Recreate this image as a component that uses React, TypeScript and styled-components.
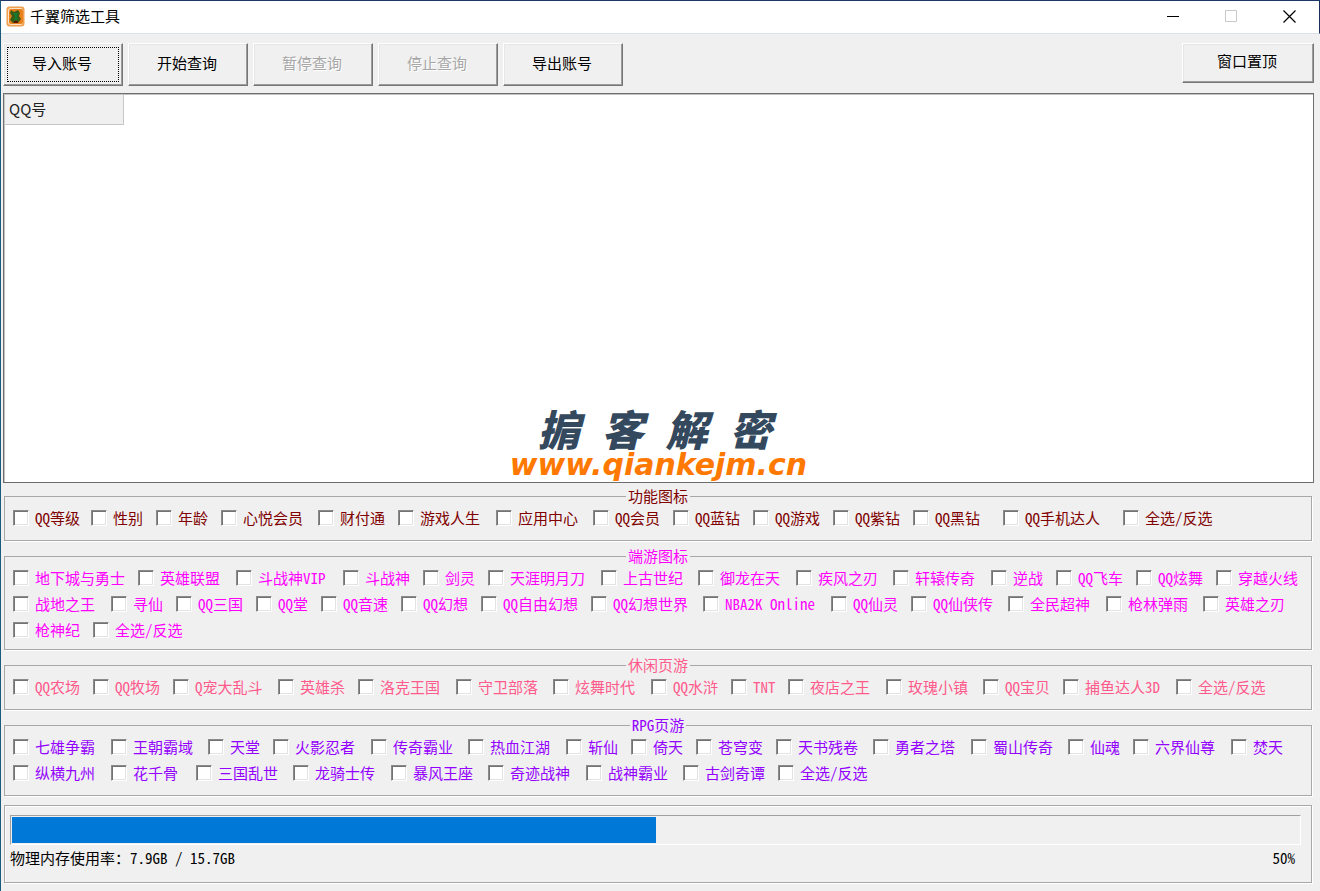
import React from "react";
import styled, { createGlobalStyle } from "styled-components";

const sans = `"Noto Sans CJK SC", "Noto Sans", sans-serif`;

const GlobalStyle = createGlobalStyle`
  *, *::before, *::after { box-sizing: border-box; }
  body { margin: 0; background: #f0f0f0; color: #000; font: 15px/18px ${sans}; }
`;

const Window = styled.div`
  display: flex;
  flex-direction: column;
  min-height: 100vh;
  background: #f0f0f0;
  border-top: 1px solid #1c3764;
  border-left: 1px solid #1b5a7d;
`;

const TitleBar = styled.header`
  display: flex;
  align-items: center;
  height: 33px;
  padding: 0 1px 2px 5px;
  background: #fff;
  border-right: 1px solid #1c2f5c;
  border-bottom: 1px solid #d9e2e8;
`;

const Title = styled.h1`
  flex: 1;
  margin: 0 0 0 5px;
  font-size: 15px;
  font-weight: 400;
`;

const CaptionButton = styled.button`
  display: flex;
  align-items: center;
  justify-content: center;
  width: 58px;
  height: 30px;
  padding: 0;
  border: 0;
  background: transparent;
  color: #000;

  &:disabled { color: #c8c8c8; }
`;

const Toolbar = styled.div`
  display: flex;
  align-items: flex-start;
  gap: 5px;
  padding: 9px 6px 7px 2px;
`;

const Spacer = styled.div`
  flex: 1;
`;

const PushButton = styled.button<{ $wide?: boolean }>`
  width: ${(p) => (p.$wide ? 132 : 120)}px;
  height: ${(p) => (p.$wide ? 40 : 43)}px;
  padding: 0 2px 4px 0;
  border: 1px solid;
  border-color: #fff #767676 #767676 #fff;
  background: #f0f0f0;
  box-shadow: inset -1px -1px #9c9c9c, inset 1px 1px #e6e6e6;
  color: #000;
  font: 15px/18px ${sans};

  &:disabled { color: #a6a6a6; text-shadow: 1px 1px #fff; }
`;

const FocusButton = styled(PushButton)`
  outline: 1px dotted #000;
  outline-offset: -5px;
`;

const AccountList = styled.section`
  display: flex;
  flex: 1;
  flex-direction: column;
  align-items: center;
  justify-content: space-between;
  min-height: 200px;
  margin: 0 6px 4px 2px;
  background: #fff;
  border: 1px solid #6e6e6e;
  box-shadow: inset 1px 1px #c0c0c0;
`;

const AccountTable = styled.table`
  align-self: flex-start;
  border-collapse: separate;
  border-spacing: 0;
`;

const HeadCell = styled.th`
  width: 120px;
  height: 31px;
  padding: 0 4px 2px;
  background: #f0f0f0;
  border: 1px solid #c6c6c6;
  color: #222;
  font-weight: 400;
  text-align: left;
`;

const Brand = styled.div`
  display: flex;
  flex-direction: column;
  align-items: center;
  font-style: italic;
  font-weight: 700;
`;

const BrandName = styled.div`
  display: flex;
  gap: 22px;
  margin-right: 8px;
  color: #34495e;
  font-size: 42px;
  font-weight: 900;
  line-height: 40px;
`;

const BrandSite = styled.div`
  color: #ff7800;
  font: italic 700 30px/34px "DejaVu Sans", sans-serif;
`;

const Groups = styled.form`
  display: flex;
  flex-direction: column;
  gap: 6px;
  margin: 0 8px 9px 3px;
`;

const Group = styled.fieldset<{ $color: string; $tight?: boolean }>`
  min-width: 0;
  margin: 0;
  padding: 0 8px ${(p) => (p.$tight ? 6 : 9)}px;
  border: 1px solid #a8a8a8;
  box-shadow: 1px 1px #fff;
  color: ${(p) => p.$color};
`;

const Legend = styled.legend`
  margin: 0 auto;
  padding: 0 2px;
  line-height: 18px;
  font-feature-settings: "hwid";
`;

const Row = styled.div`
  display: flex;
  flex-wrap: wrap;
`;

const Item = styled.label<{ $width?: number }>`
  display: flex;
  align-items: center;
  gap: 6px;
  width: ${(p) => (p.$width ? `${p.$width}px` : "auto")};
  height: 26px;
  white-space: nowrap;
  font-feature-settings: "hwid";
`;

const Box = styled.input.attrs({ type: "checkbox" })`
  appearance: none;
  flex: none;
  width: 16px;
  height: 16px;
  margin: 0;
  border: 1px solid;
  border-color: #8a8a8a #fff #fff #8a8a8a;
  background: #fff;
  box-shadow: inset 1px 1px #737373, inset -1px -1px #e3e3e3;

  &:checked { background: #555; }
`;

const StatusPanel = styled.footer`
  height: 78px;
  margin: 0 8px 8px 3px;
  padding: 9px 10px 0 5px;
  border: 1px solid #a8a8a8;
  box-shadow: 1px 1px #fff, inset 1px 1px #fff;
`;

const Track = styled.div`
  height: 30px;
  padding: 1px;
  border: 1px solid;
  border-color: #a0a0a0 #fff #fff #a0a0a0;
`;

const Fill = styled.div`
  height: 100%;
  background: #0078d7;
`;

const StatusLine = styled.div`
  display: flex;
  justify-content: space-between;
  padding: 3px 6px 0 0;
  line-height: 20px;
  font-feature-settings: "hwid";
`;

type Entry = [label: string, width?: number];

interface GroupData {
  title: string;
  color: string;
  tight?: boolean;
  rows: Entry[][];
}

const groups: GroupData[] = [
  {
    title: "功能图标",
    color: "#800000",
    rows: [
      [
        ["QQ等级", 78], ["性别", 65], ["年龄", 65], ["心悦会员", 97], ["财付通", 80],
        ["游戏人生", 98], ["应用中心", 97], ["QQ会员", 80], ["QQ蓝钻", 80], ["QQ游戏", 80],
        ["QQ紫钻", 80], ["QQ黑钻", 90], ["QQ手机达人", 120], ["全选/反选"],
      ],
    ],
  },
  {
    title: "端游图标",
    color: "#ff00ff",
    tight: true,
    rows: [
      [
        ["地下城与勇士", 125], ["英雄联盟", 98], ["斗战神VIP", 107], ["斗战神", 80], ["剑灵", 65],
        ["天涯明月刀", 113], ["上古世纪", 97], ["御龙在天", 98], ["疾风之刃", 97], ["轩辕传奇", 98],
        ["逆战", 65], ["QQ飞车", 80], ["QQ炫舞", 80], ["穿越火线"],
      ],
      [
        ["战地之王", 98], ["寻仙", 65], ["QQ三国", 80], ["QQ堂", 65], ["QQ音速", 80],
        ["QQ幻想", 80], ["QQ自由幻想", 110], ["QQ幻想世界", 112], ["NBA2K Online", 128], ["QQ仙灵", 80],
        ["QQ仙侠传", 97], ["全民超神", 98], ["枪林弹雨", 97], ["英雄之刃"],
      ],
      [["枪神纪", 80], ["全选/反选"]],
    ],
  },
  {
    title: "休闲页游",
    color: "#ff5a8c",
    rows: [
      [
        ["QQ农场", 80], ["QQ牧场", 80], ["Q宠大乱斗", 105], ["英雄杀", 80], ["洛克王国", 98],
        ["守卫部落", 97], ["炫舞时代", 98], ["QQ水浒", 80], ["TNT", 57], ["夜店之王", 98],
        ["玫瑰小镇", 97], ["QQ宝贝", 80], ["捕鱼达人3D", 113], ["全选/反选"],
      ],
    ],
  },
  {
    title: "RPG页游",
    color: "#9400ff",
    rows: [
      [
        ["七雄争霸", 98], ["王朝霸域", 97], ["天堂", 65], ["火影忍者", 98], ["传奇霸业", 97],
        ["热血江湖", 98], ["斩仙", 65], ["倚天", 65], ["苍穹变", 80], ["天书残卷", 97],
        ["勇者之塔", 98], ["蜀山传奇", 97], ["仙魂", 65], ["六界仙尊", 98], ["焚天"],
      ],
      [
        ["纵横九州", 98], ["花千骨", 85], ["三国乱世", 97], ["龙骑士传", 98], ["暴风王座", 97],
        ["奇迹战神", 98], ["战神霸业", 97], ["古剑奇谭", 95], ["全选/反选"],
      ],
    ],
  },
];

const AppIcon = () => (
  <svg width="19" height="21" viewBox="0 0 19 21" aria-hidden="true">
    <rect x="0.5" y="0.5" width="18" height="20" rx="3" fill="#f0a050" />
    <rect x="2" y="2" width="15" height="17" rx="3" fill="#fbe6cc" />
    <rect x="3" y="3" width="14" height="15" rx="2" fill="#e8801c" />
    <path d="M5 4l3 2 4-2 2 3-1 3 2 3-3 4H7l-3-3 2-4-2-3z" fill="#3c5a14" />
    <path d="M7 7h5l-1 4 1 3H8l1-3z" fill="#147a32" />
    <path d="M8 15h4v2H8z" fill="#5a1a08" />
  </svg>
);

export default function App() {
  const used = 50;
  return (
    <>
      <GlobalStyle />
      <Window>
        <TitleBar>
          <AppIcon />
          <Title>千翼筛选工具</Title>
          <CaptionButton aria-label="最小化">
            <svg width="13" height="13" aria-hidden="true"><path d="M0 6.5h12" stroke="currentColor" /></svg>
          </CaptionButton>
          <CaptionButton aria-label="最大化" disabled>
            <svg width="13" height="13" aria-hidden="true"><path d="M.5 .5h11v11H.5z" fill="none" stroke="currentColor" /></svg>
          </CaptionButton>
          <CaptionButton aria-label="关闭">
            <svg width="13" height="13" aria-hidden="true"><path d="M.5 .5l12 12M12.5 .5l-12 12" stroke="currentColor" strokeWidth="1.2" /></svg>
          </CaptionButton>
        </TitleBar>

        <Toolbar>
          <FocusButton>导入账号</FocusButton>
          <PushButton>开始查询</PushButton>
          <PushButton disabled>暂停查询</PushButton>
          <PushButton disabled>停止查询</PushButton>
          <PushButton>导出账号</PushButton>
          <Spacer />
          <PushButton $wide>窗口置顶</PushButton>
        </Toolbar>

        <AccountList>
          <AccountTable>
            <thead>
              <tr>
                <HeadCell scope="col">QQ号</HeadCell>
              </tr>
            </thead>
          </AccountTable>
          <Brand>
            <BrandName>
              {["掮", "客", "解", "密"].map((c) => (
                <span key={c}>{c}</span>
              ))}
            </BrandName>
            <BrandSite>www.qiankejm.cn</BrandSite>
          </Brand>
        </AccountList>

        <Groups>
          {groups.map((g) => (
            <Group key={g.title} $color={g.color} $tight={g.tight}>
              <Legend>{g.title}</Legend>
              {g.rows.map((row, i) => (
                <Row key={i}>
                  {row.map(([label, width]) => (
                    <Item key={label} $width={width}>
                      <Box />
                      <span>{label}</span>
                    </Item>
                  ))}
                </Row>
              ))}
            </Group>
          ))}
        </Groups>

        <StatusPanel>
          <Track role="progressbar" aria-label="物理内存使用率" aria-valuenow={used} aria-valuemin={0} aria-valuemax={100}>
            <Fill style={{ width: `${used}%` }} />
          </Track>
          <StatusLine>
            <span>物理内存使用率：7.9GB / 15.7GB</span>
            <span>{used}%</span>
          </StatusLine>
        </StatusPanel>
      </Window>
    </>
  );
}
